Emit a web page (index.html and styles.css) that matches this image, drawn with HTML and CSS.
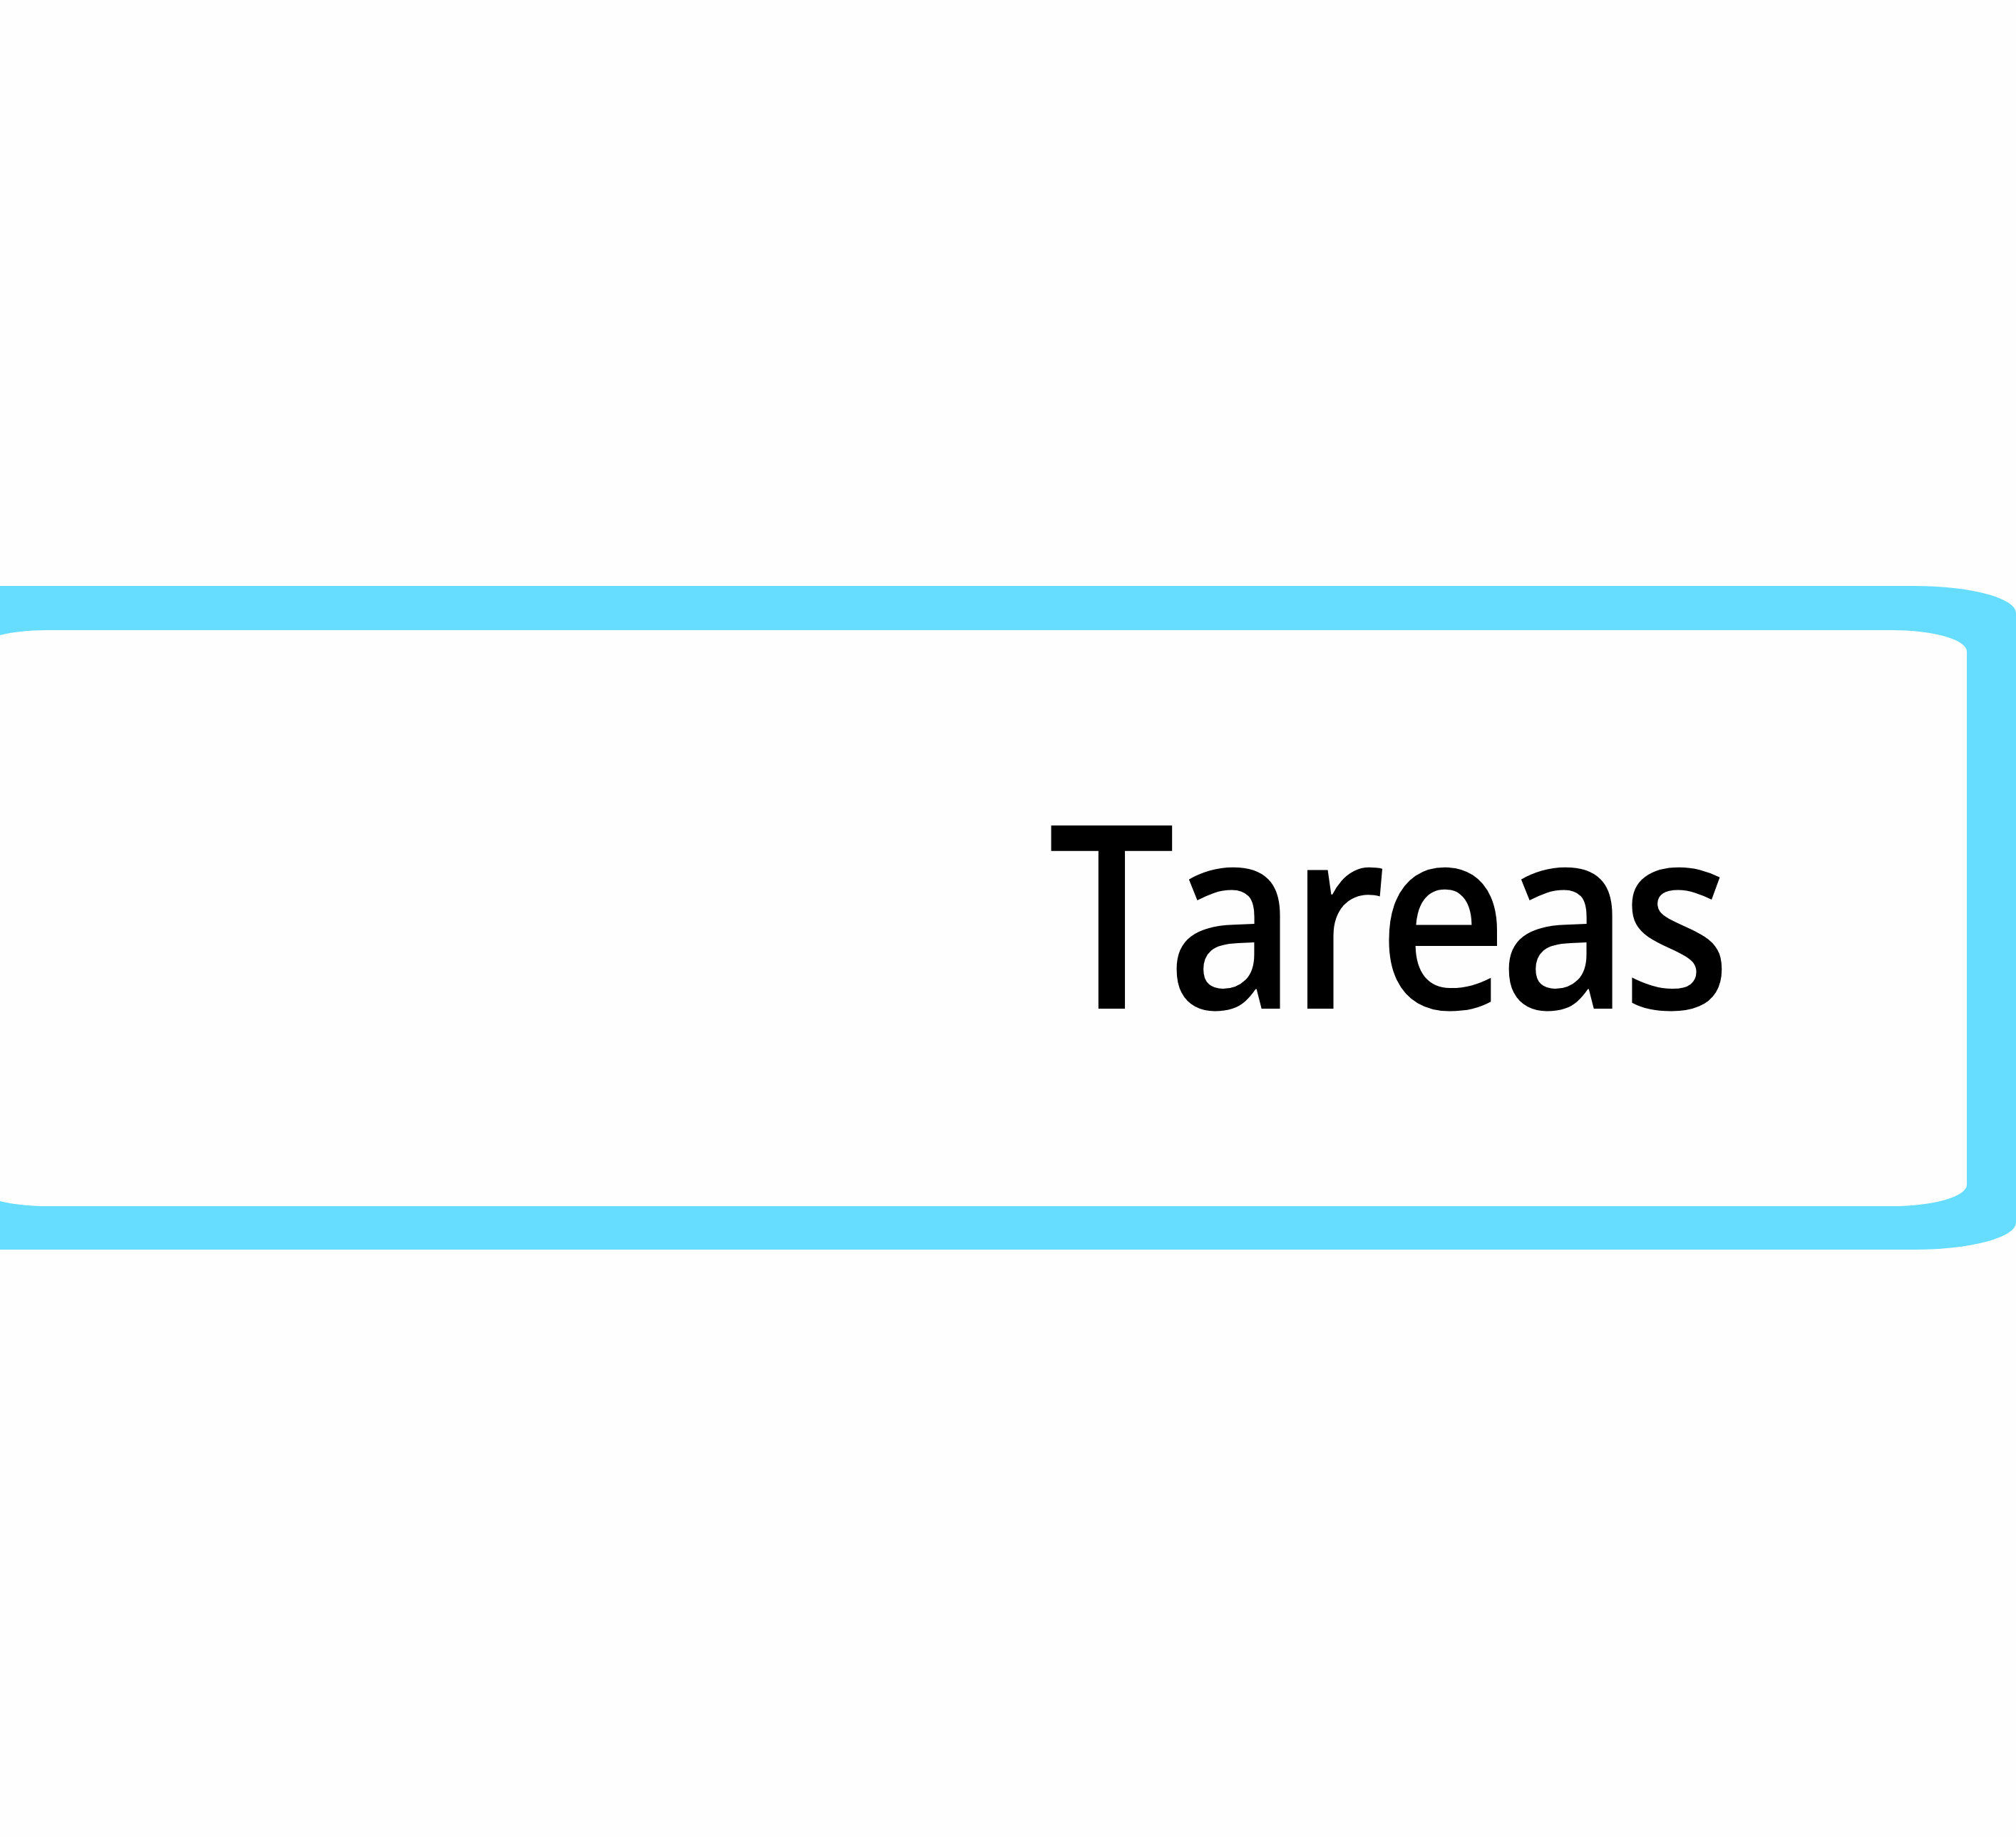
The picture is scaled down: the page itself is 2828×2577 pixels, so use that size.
FILE: index.html
```html
<!DOCTYPE html>
<html lang="es">
<head>
<meta charset="utf-8">
<title>Tareas</title>
<link rel="stylesheet" href="styles.css">
</head>
<body>
<main class="page">
  <section class="frame">
    <div class="panel">
      <h1 class="title">Tareas</h1>
    </div>
  </section>
</main>
</body>
</html>
```
FILE: styles.css
```css
html, body {
  margin: 0;
  padding: 0;
  background: #fefefe;
}
.page {
  width: 2828px;
  height: 2577px;
  overflow: hidden;
  padding-top: 822px;
  box-sizing: border-box;
}
.frame {
  margin-left: -100px;
  width: 2928px;
  height: 931px;
  box-sizing: border-box;
  background: #66ddff;
  border-radius: 80px 141px 141px 80px / 38px 38px 38px 38px;
  padding: 62px 69px 61px 62px;
}
.panel {
  height: 100%;
  box-sizing: border-box;
  background: #fefefe;
  border-radius: 105px / 30px;
  display: flex;
  align-items: center;
  padding-left: 1508px;
  padding-bottom: 26px;
}
.title {
  margin: 0;
  font-family: "Open Sans", "Noto Sans", sans-serif;
  font-weight: 600;
  letter-spacing: -14px;
  font-size: 360px;
  line-height: 1;
  color: #000;
  transform: scaleX(0.88);
  transform-origin: left center;
}
```
